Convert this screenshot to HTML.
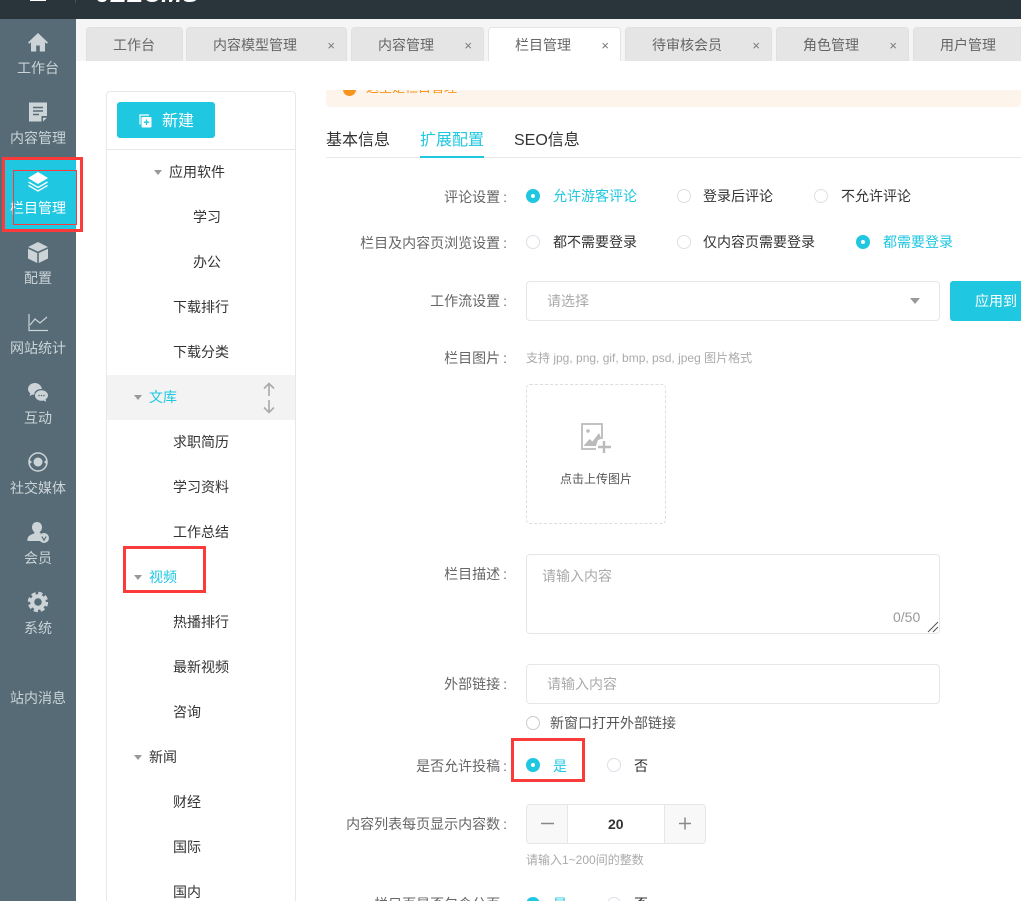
<!DOCTYPE html>
<html lang="zh-CN"><head><meta charset="utf-8"><title>栏目管理</title>
<style>
*{box-sizing:border-box}
html,body{margin:0;padding:0;width:1021px;height:901px;overflow:hidden;background:#fff}
body{position:relative;font-family:"Liberation Sans","Noto Sans CJK SC",sans-serif;font-size:14px;color:#333}
.a{position:absolute}
.t{position:absolute;white-space:nowrap;line-height:20px;height:20px}
.clip{position:absolute;overflow:hidden}
.top{left:0;top:0;width:1021px;height:19px;background:#29343b;overflow:hidden}
.side{left:0;top:19px;width:76px;height:882px;background:#566b76}
.sl{position:absolute;left:0;width:76px;text-align:center;color:#cbd3d7;font-size:14px;line-height:20px;white-space:nowrap}
.si{position:absolute;left:26px;width:24px;height:24px}
.tab{position:absolute;top:27px;height:34px;background:#e5e5e5;border:1px solid #e0e0e0;border-bottom:0;border-radius:4px 4px 0 0;padding-left:26px;line-height:35px;color:#666;font-size:14px;white-space:nowrap;overflow:hidden}
.tab.on{background:#fff;border-color:#e4e4e4}
.x{position:absolute;top:0;right:11px;color:#777;font-size:13px;line-height:36px}
.tree{left:106px;top:91px;width:190px;height:830px;border:1px solid #e8e8e8;border-radius:4px}
.n{position:absolute;white-space:nowrap;line-height:20px;font-size:14px;color:#333}
.arr{position:absolute;width:0;height:0;border-left:4.5px solid transparent;border-right:4.5px solid transparent;border-top:5px solid #999}
.lb{position:absolute;left:300px;width:207px;text-align:right;font-size:14px;line-height:20px;color:#666;white-space:nowrap}
.lb i{font-style:normal;margin-left:3px}
.r{position:absolute;width:14px;height:14px;border-radius:50%;border:1px solid #dcdfe6;background:#fff}
.r.on{background:#1fc7e0;border-color:#1fc7e0}
.r.on:after{content:"";position:absolute;left:4px;top:4px;width:4px;height:4px;border-radius:50%;background:#fff}
.box{position:absolute;border:1px solid #e6e6e6;border-radius:4px;background:#fff}
.c{color:#1fc7e0}
.red{position:absolute;border:3px solid #fb3a3a}
</style></head><body>

<div class="a top">
  <div class="a" style="left:30px;top:0;width:16px;height:1px;background:#fff"></div>
  <div class="a" style="left:75px;top:0;width:1px;height:3px;background:#46525a"></div>
  <div class="t" style="left:96px;top:-18px;height:24px;font-size:25px;line-height:24px;font-weight:bold;font-style:italic;color:#fff">JEECMS</div>
</div>

<div class="a" style="left:76px;top:19px;width:945px;height:42px;background:#f5f5f5"></div>

<div class="a side"></div>
<div class="a" style="left:3px;top:160px;width:73px;height:70px;background:#1fc7e0"></div>

<svg class="si" style="top:30px" viewBox="0 0 24 24"><path fill="#ccd4d8" d="M12 3 2 12.500l1.300 1.200L5 12.200V21.500h5.200v-6h3.600v6H19v-9.300l1.700 1.500 1.300-1.200z"/></svg>
<div class="sl" style="top:58px">工作台</div>
<svg class="si" style="top:100px" viewBox="0 0 24 24"><path fill="#ccd4d8" d="M3 2.500h18v13.500h-5.500v5.500H3z"/><path fill="#ccd4d8" d="M17 17.800h4l-4 3.700z"/><path stroke="#566b76" stroke-width="1.600" fill="none" d="M7 7.500h10M7 11h10M7 14.500h6"/></svg>
<div class="sl" style="top:128px">内容管理</div>
<svg class="si" style="top:170px" viewBox="0 0 24 24"><path fill="#fff" d="M12 2 2 8l10 6 10-6z"/><path fill="none" stroke="#fff" stroke-width="1.300" d="M2.500 12 12 17.500 21.500 12M2.500 15.500 12 21l9.500-5.500"/></svg>
<div class="sl" style="top:198px;color:#fff">栏目管理</div>
<svg class="si" style="top:240px" viewBox="0 0 24 24"><path fill="#ccd4d8" d="M12 2 2 7l10 4.500L22 7z"/><path fill="#ccd4d8" d="M2 8.800v9.700l9.200 4.500V13zM22 8.800v9.700L12.800 23V13z"/></svg>
<div class="sl" style="top:268px">配置</div>
<svg class="si" style="top:310px" viewBox="0 0 24 24"><path fill="none" stroke="#ccd4d8" stroke-width="1.200" d="M3 4v16.500h19M4 15l5-6 5 4 7-6"/></svg>
<div class="sl" style="top:338px">网站统计</div>
<svg class="si" style="top:380px" viewBox="0 0 24 24"><path fill="#ccd4d8" d="M9 3C5 3 2 5.800 2 9c0 1.800.9 3.300 2.300 4.400L3.500 16l3-1.500c.6.200 1.200.3 1.800.3C8 11.500 11 9 15 9h1c-.6-3.400-3.500-6-7-6z"/><path fill="#ccd4d8" d="M15.500 10.200c-3.600 0-6.500 2.400-6.500 5.300s2.900 5.300 6.500 5.300c.7 0 1.400-.1 2-.3l2.800 1.300-.7-2.500c1.500-1 2.400-2.300 2.400-3.800 0-2.900-2.900-5.300-6.500-5.300z"/><circle cx="13" cy="15.500" r=".8" fill="#566b76"/><circle cx="15.500" cy="15.500" r=".8" fill="#566b76"/><circle cx="18" cy="15.500" r=".8" fill="#566b76"/></svg>
<div class="sl" style="top:408px">互动</div>
<svg class="si" style="top:450px" viewBox="0 0 24 24"><circle cx="12" cy="12" r="9" fill="none" stroke="#ccd4d8" stroke-width="1.500"/><circle cx="12" cy="12" r="4.500" fill="#ccd4d8"/><circle cx="4" cy="12" r="1.500" fill="#ccd4d8"/><circle cx="20" cy="12" r="1.500" fill="#ccd4d8"/></svg>
<div class="sl" style="top:478px">社交媒体</div>
<svg class="si" style="top:520px" viewBox="0 0 24 24"><path fill="#ccd4d8" d="M11 2c-3 0-5 2.300-5 5.300 0 2 .9 3.700 2.300 4.800v1.400C5 14.500 1.500 16 1.500 19v2h12.800a6 6 0 0 1 1-7.500l-1.600-.6v-.8C15.100 11 16 9.300 16 7.300 16 4.300 14 2 11 2z"/><circle cx="18" cy="18" r="5" fill="#ccd4d8"/><path fill="none" stroke="#566b76" stroke-width="1.200" d="m15.800 16.500 2.200 3.700 2.200-3.700"/></svg>
<div class="sl" style="top:548px">会员</div>
<svg class="si" style="top:590px" viewBox="0 0 24 24"><circle cx="12" cy="12" r="5.800" fill="none" stroke="#ccd4d8" stroke-width="4"/><circle cx="12" cy="12" r="8.800" fill="none" stroke="#ccd4d8" stroke-width="2.800" stroke-dasharray="4.200 2.711"/></svg>
<div class="sl" style="top:618px">系统</div>
<div class="sl" style="top:688px">站内消息</div>

<div class="red" style="left:2px;top:157px;width:81px;height:75px"></div>
<div class="a" style="left:13px;top:170px;width:64px;height:55px;border:1px solid #fb3a3a"></div>

<div class="tab" style="left:86px;width:97px">工作台</div>
<div class="tab" style="left:186px;width:161px">内容模型管理<span class="x">×</span></div>
<div class="tab" style="left:351px;width:133px">内容管理<span class="x">×</span></div>
<div class="tab on" style="left:488px;width:133px">栏目管理<span class="x">×</span></div>
<div class="tab" style="left:625px;width:147px">待审核会员<span class="x">×</span></div>
<div class="tab" style="left:776px;width:133px">角色管理<span class="x">×</span></div>
<div class="tab" style="left:913px;width:133px">用户管理</div>

<div class="a tree"></div>
<div class="a" style="left:117px;top:102px;width:98px;height:36px;background:#1fc7e0;border-radius:3px"></div>
<svg class="a" style="left:137px;top:113px;width:16px;height:16px" viewBox="0 0 16 16"><path fill="none" stroke="#fff" stroke-width="1.200" d="M3 11.500V2h9"/><rect x="4.500" y="4" width="10" height="10.500" rx="1" fill="#fff"/><path stroke="#1fc7e0" stroke-width="1.300" d="M9.500 6.500v5.500M6.800 9.200h5.400"/></svg>
<div class="t" style="left:162px;top:112px;color:#fff;font-size:16px">新建</div>
<div class="a" style="left:107px;top:149px;width:188px;height:1px;background:#e8e8e8"></div>
<div class="a" style="left:107px;top:375px;width:188px;height:45px;background:#f3f3f3"></div>

<div class="arr" style="left:154px;top:170px"></div><div class="n" style="left:169px;top:162px">应用软件</div>
<div class="n" style="left:193px;top:207px">学习</div>
<div class="n" style="left:193px;top:252px">办公</div>
<div class="n" style="left:173px;top:297px">下载排行</div>
<div class="n" style="left:173px;top:342px">下载分类</div>
<div class="arr" style="left:134px;top:395px"></div><div class="n c" style="left:149px;top:387px">文库</div>
<svg class="a" style="left:262px;top:382px;width:14px;height:32px" viewBox="0 0 14 32"><path fill="none" stroke="#aaa" stroke-width="1.600" d="M7 14V2M2 6.500 7 1.500l5 5M7 18v12M2 25.500l5 5 5-5"/></svg>
<div class="n" style="left:173px;top:432px">求职简历</div>
<div class="n" style="left:173px;top:477px">学习资料</div>
<div class="n" style="left:173px;top:522px">工作总结</div>
<div class="arr" style="left:134px;top:575px"></div><div class="n c" style="left:149px;top:567px">视频</div>
<div class="red" style="left:123px;top:546px;width:83px;height:47px"></div>
<div class="n" style="left:173px;top:612px">热播排行</div>
<div class="n" style="left:173px;top:657px">最新视频</div>
<div class="n" style="left:173px;top:702px">咨询</div>
<div class="arr" style="left:134px;top:755px"></div><div class="n" style="left:149px;top:747px">新闻</div>
<div class="n" style="left:173px;top:792px">财经</div>
<div class="n" style="left:173px;top:837px">国际</div>
<div class="n" style="left:173px;top:882px">国内</div>

<div class="clip" style="left:326px;top:90px;width:695px;height:17px;background:#fdf5ec;border-radius:0 0 4px 4px">
  <div class="a" style="left:17px;top:-7px;width:13px;height:13px;border-radius:50%;background:#f7941d"></div>
  <div class="t" style="left:40px;top:-12px;color:#f7941d;font-size:13px">这里是栏目管理</div>
</div>

<div class="t" style="left:326px;top:131px;font-size:16px">基本信息</div>
<div class="t c" style="left:420px;top:131px;font-size:16px">扩展配置</div>
<div class="t" style="left:514px;top:131px;font-size:16px">SEO信息</div>
<div class="a" style="left:326px;top:157px;width:695px;height:1px;background:#e8e8e8"></div>
<div class="a" style="left:420px;top:156px;width:64px;height:2px;background:#1fc7e0"></div>

<div class="lb" style="top:187px">评论设置<i>:</i></div>
<div class="r on" style="left:526px;top:189px"></div><div class="t c" style="left:553px;top:186px">允许游客评论</div>
<div class="r" style="left:677px;top:189px"></div><div class="t" style="left:703px;top:186px">登录后评论</div>
<div class="r" style="left:814px;top:189px"></div><div class="t" style="left:841px;top:186px">不允许评论</div>

<div class="lb" style="top:233px">栏目及内容页浏览设置<i>:</i></div>
<div class="r" style="left:526px;top:235px"></div><div class="t" style="left:553px;top:232px">都不需要登录</div>
<div class="r" style="left:677px;top:235px"></div><div class="t" style="left:703px;top:232px">仅内容页需要登录</div>
<div class="r on" style="left:856px;top:235px"></div><div class="t c" style="left:883px;top:232px">都需要登录</div>

<div class="lb" style="top:291px">工作流设置<i>:</i></div>
<div class="box" style="left:526px;top:281px;width:414px;height:40px"></div>
<div class="t" style="left:547px;top:291px;color:#aaa">请选择</div>
<div class="arr" style="left:910px;top:298px;border-left-width:5px;border-right-width:5px;border-top-width:6px"></div>
<div class="a" style="left:950px;top:281px;width:90px;height:40px;background:#1fc7e0;border-radius:3px"></div>
<div class="t" style="left:975px;top:291px;color:#fff">应用到</div>

<div class="lb" style="top:348px">栏目图片<i>:</i></div>
<div class="t" style="left:526px;top:348px;font-size:12px;color:#aaa">支持 jpg, png, gif, bmp, psd, jpeg 图片格式</div>
<div class="a" style="left:526px;top:384px;width:140px;height:140px;border:1px dashed #ddd;border-radius:4px"></div>
<svg class="a" style="left:580px;top:422px;width:32px;height:32px" viewBox="0 0 32 32"><path fill="none" stroke="#bbb" stroke-width="1.800" d="M22 17V2H2v25h14"/><circle cx="8" cy="9" r="1.800" fill="#bbb"/><path fill="#bbb" d="m3.500 24 6-7 3 2.500L19 11l2 5v1l-3 1-2 6z"/><path stroke="#bbb" stroke-width="2.400" d="M24 19v12M18 25h13"/></svg>
<div class="t" style="left:560px;top:469px;font-size:12px;color:#555">点击上传图片</div>

<div class="lb" style="top:564px">栏目描述<i>:</i></div>
<div class="box" style="left:526px;top:554px;width:414px;height:80px"></div>
<div class="t" style="left:542px;top:566px;color:#aaa;font-size:14px">请输入内容</div>
<div class="t" style="left:893px;top:607px;color:#999;font-size:14px">0/50</div>
<svg class="a" style="left:927px;top:621px;width:12px;height:12px" viewBox="0 0 12 12"><path stroke="#555" d="M1 11 11 1M6 11l5-5"/></svg>

<div class="lb" style="top:674px">外部链接<i>:</i></div>
<div class="box" style="left:526px;top:664px;width:414px;height:40px"></div>
<div class="t" style="left:547px;top:674px;color:#aaa;font-size:14px">请输入内容</div>
<div class="r" style="left:526px;top:716px;border-color:#ccc"></div><div class="t" style="left:550px;top:713px;color:#555;font-size:14px">新窗口打开外部链接</div>

<div class="lb" style="top:756px">是否允许投稿<i>:</i></div>
<div class="r on" style="left:526px;top:758px"></div><div class="t c" style="left:553px;top:756px">是</div>
<div class="r" style="left:607px;top:758px"></div><div class="t" style="left:634px;top:756px">否</div>
<div class="red" style="left:511px;top:738px;width:74px;height:44px"></div>

<div class="lb" style="top:814px">内容列表每页显示内容数<i>:</i></div>
<div class="box" style="left:526px;top:804px;width:180px;height:40px;background:#f8f8f8"></div>
<div class="a" style="left:567px;top:805px;width:98px;height:38px;background:#fff;border-left:1px solid #e6e6e6;border-right:1px solid #e6e6e6"></div>
<svg class="a" style="left:539px;top:817px;width:160px;height:13px" viewBox="0 0 160 13"><path stroke="#888" stroke-width="1.500" d="M2 6.500h13M140 6.500h12M146 .5v12"/></svg>
<div class="t" style="left:608px;top:814px;font-weight:bold;color:#333">20</div>
<div class="t" style="left:526px;top:850px;font-size:12px;color:#aaa">请输入1~200间的整数</div>

<div class="lb" style="top:894px">栏目页是否包含分页<i>:</i></div>
<div class="r on" style="left:526px;top:897px"></div><div class="t c" style="left:553px;top:894px">是</div>
<div class="r" style="left:607px;top:897px"></div><div class="t" style="left:634px;top:894px">否</div>

</body></html>
